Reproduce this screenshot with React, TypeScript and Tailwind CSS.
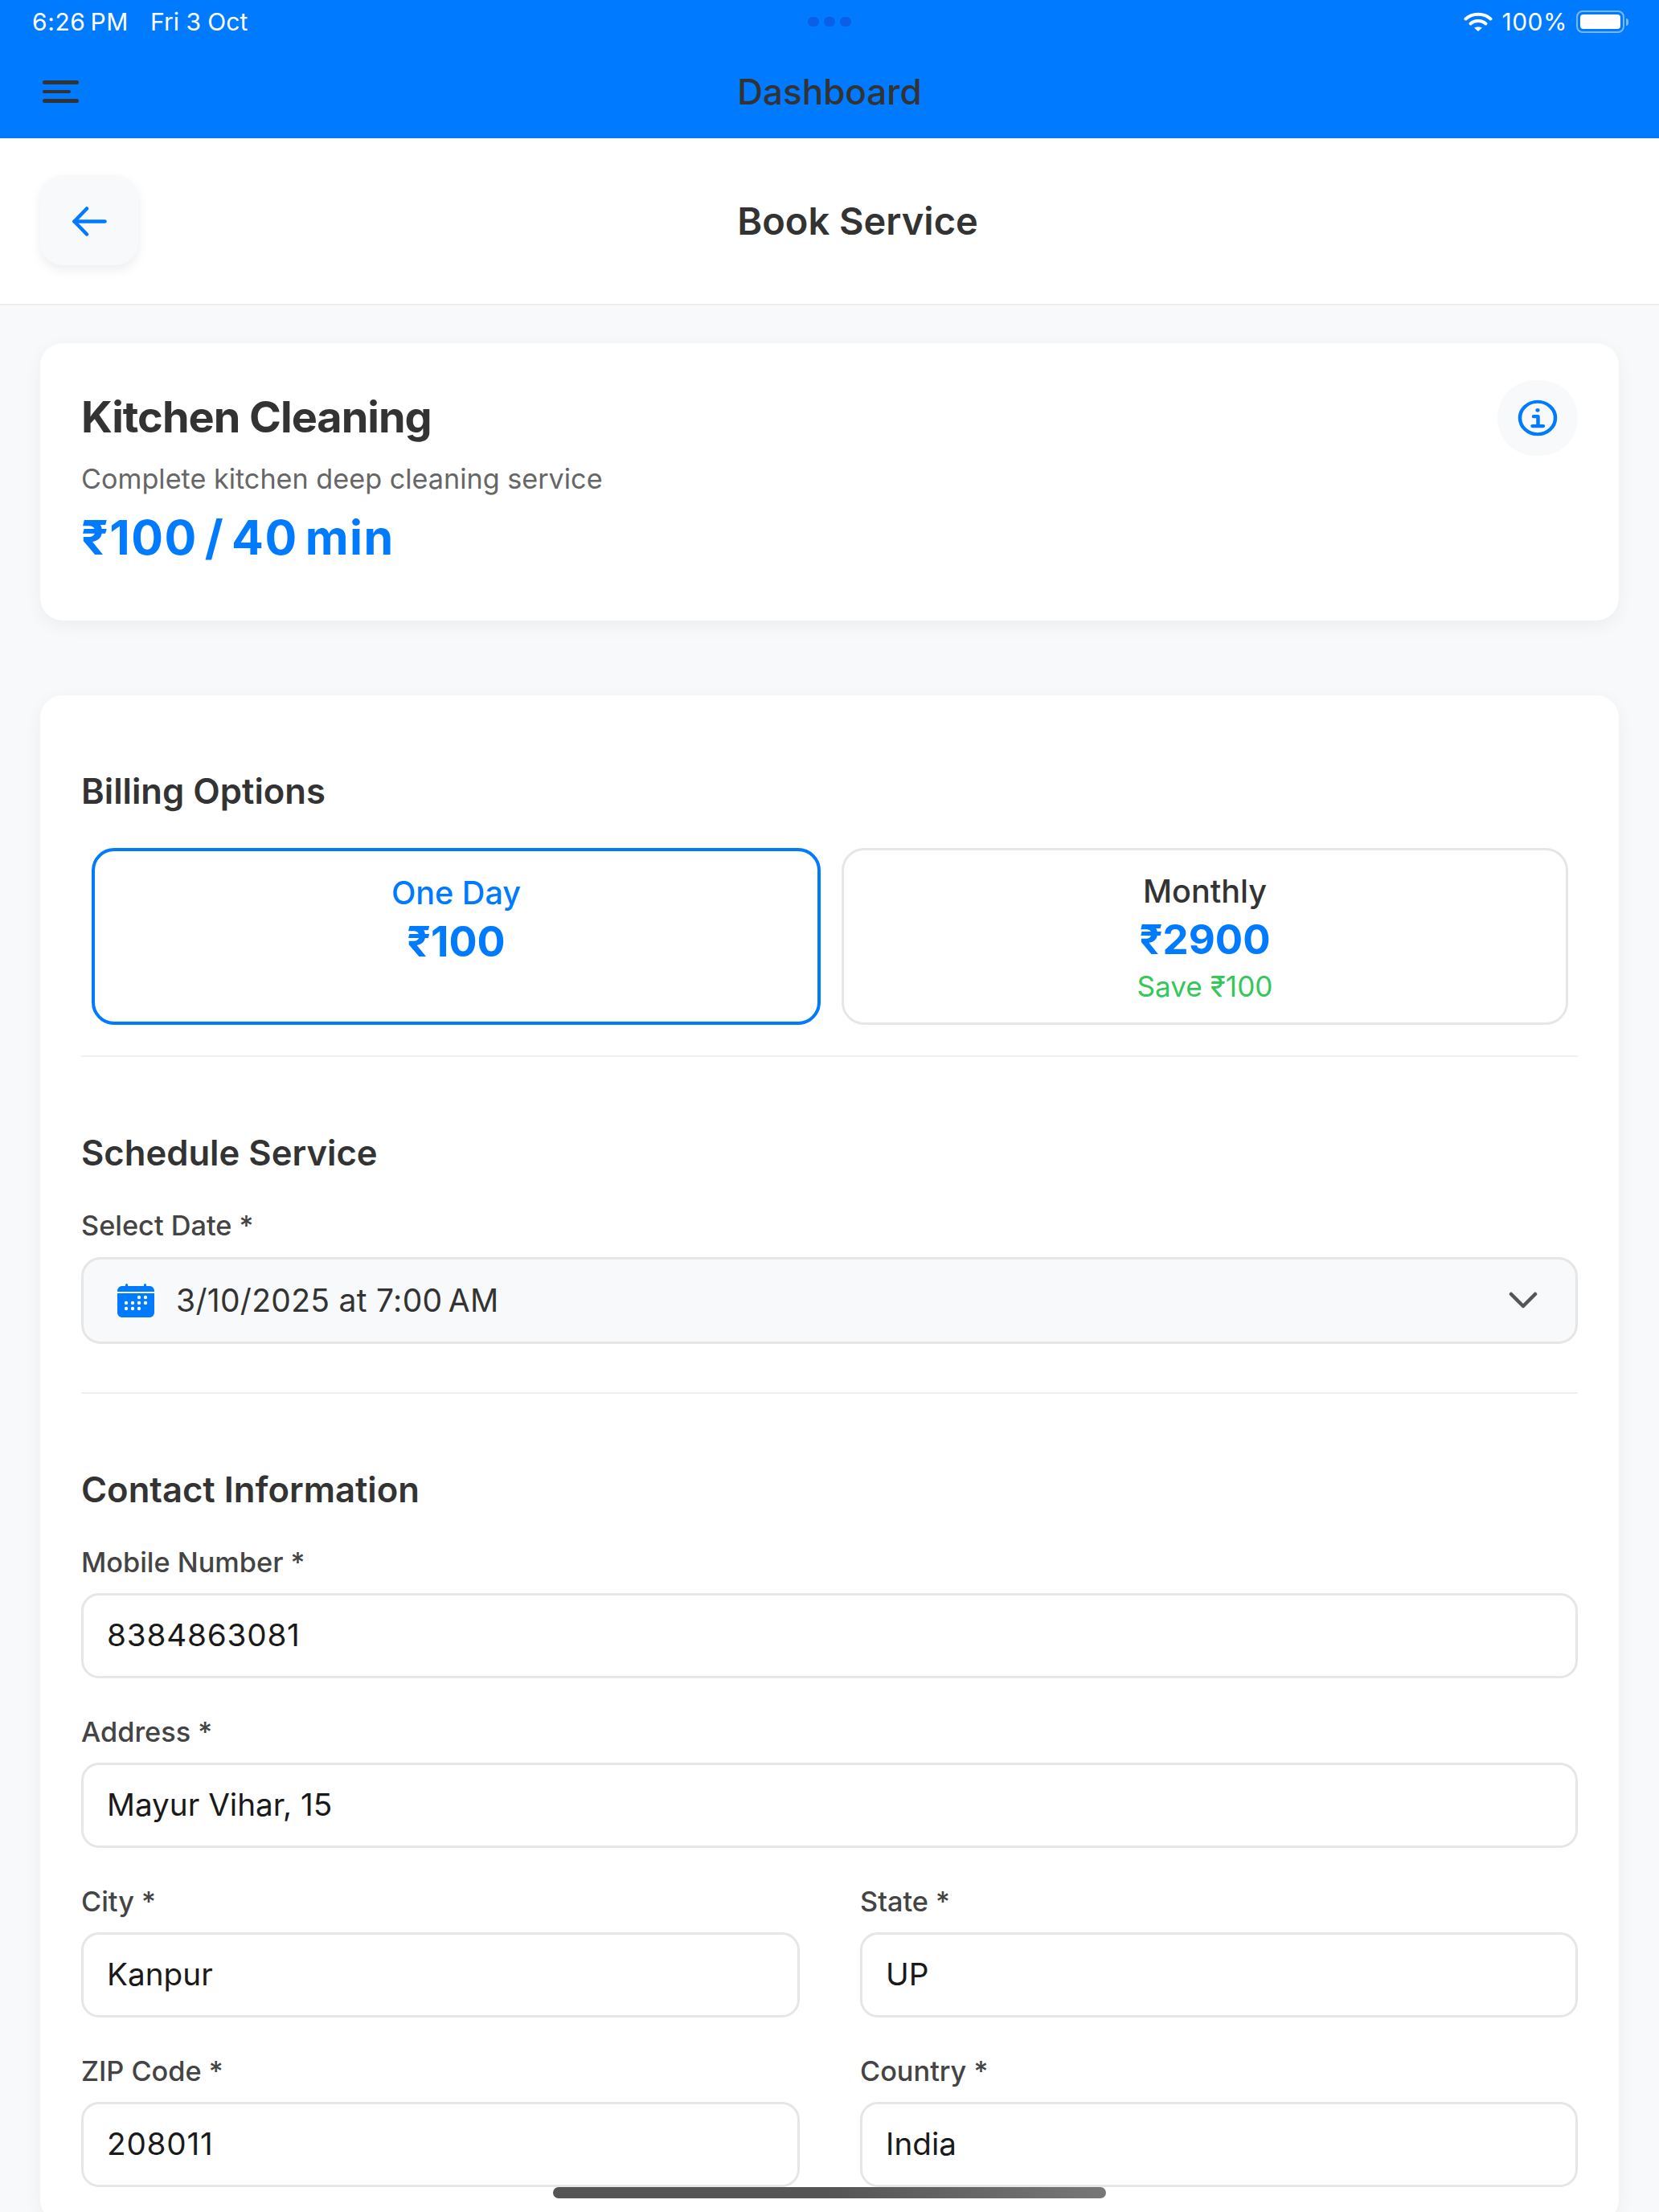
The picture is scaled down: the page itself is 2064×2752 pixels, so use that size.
import React from "react";

function Wifi() {
  return (
    <svg width="36" height="24" viewBox="0 0 36 24" fill="none" stroke="white" strokeLinecap="round">
      <path d="M2.5 8.5C11 0.8 25 0.8 33.5 8.5" strokeWidth="4" />
      <path d="M8.5 14.5C13.5 9.8 22.5 9.8 27.5 14.5" strokeWidth="4" />
      <path d="M13 19.5 C15.5 18 20.5 18 23 19.5 L18 24 Z" fill="white" stroke="none" />
    </svg>
  );
}

function CalendarIcon() {
  const dots: [number, number][] = [
    [26, 17], [34, 17],
    [10, 24], [18, 24], [26, 24], [34, 24],
    [10, 31], [18, 31], [26, 31],
  ];
  return (
    <svg width="46" height="42" viewBox="0 0 46 42" className="shrink-0">
      <rect x="10" y="0" width="3" height="6" rx="1.5" fill="#007AFF" />
      <rect x="33" y="0" width="3" height="6" rx="1.5" fill="#007AFF" />
      <path d="M6 3H40C43.3 3 46 5.7 46 9V10H0V9C0 5.7 2.7 3 6 3Z" fill="#007AFF" />
      <path d="M0 12H46V36C46 39.3 43.3 42 40 42H6C2.7 42 0 39.3 0 36V12Z" fill="#007AFF" />
      {dots.map(([x, y]) => (
        <circle key={`${x}-${y}`} cx={x + 1} cy={y} r="2.2" fill="white" />
      ))}
    </svg>
  );
}

function Field({ label, value, numeric, className }: { label: string; value: string; numeric?: boolean; className?: string }) {
  return (
    <div className={className}>
      <div className="h-[24px] text-[34.3px] leading-[24px] font-medium text-[#444444]">{label}</div>
      <div className={`mt-[25.5px] h-[106px] flex items-center px-[29px] bg-white border-[3px] border-[#e6e6e6] rounded-[22px] text-[38.7px] text-[#1a1a1a] ${numeric ? "tracking-[0.8px]" : ""}`}>
        {value}
      </div>
    </div>
  );
}

function SectionTitle({ children }: { children: React.ReactNode }) {
  return <h2 className="h-[40px] text-[43.6px] leading-[40px] font-semibold text-[#333333]">{children}</h2>;
}

export default function App() {
  return (
    <div
      className="relative h-[2752px] w-[2064px] overflow-hidden bg-[#f8f9fa]"
      style={{ fontFamily: "Inter, 'Noto Sans', sans-serif" }}
    >
      <header className="h-[172px] bg-[#007AFF] shadow-[0_1px_3px_rgba(0,0,0,0.1)]">
        <div className="relative h-[54px] flex items-center justify-between pl-[40px] pr-[38px] text-white text-[30px]">
          <div className="flex gap-[27px]">
            <span className="tracking-[0.6px]">6:26{"\u202f"}PM</span>
            <span>Fri 3 Oct</span>
          </div>
          <div className="absolute left-[1005px] top-[21px] flex gap-[6px]">
            <span className="w-[14px] h-[12px] rounded-full bg-[#0a5fe6]" />
            <span className="w-[14px] h-[12px] rounded-full bg-[#0a5fe6]" />
            <span className="w-[14px] h-[12px] rounded-full bg-[#0a5fe6]" />
          </div>
          <div className="flex items-center">
            <Wifi />
            <span className="ml-[11px] tracking-[0.5px]">100%</span>
            <div className="ml-[11px] flex items-center">
              <div className="w-[60px] h-[28px] rounded-[8px] border-[2px] border-[#7db8ff] p-[3px]">
                <div className="h-full w-full rounded-[4px] bg-white" />
              </div>
              <div className="ml-[2px] w-[3px] h-[9px] rounded-r-full bg-[#7db8ff]" />
            </div>
          </div>
        </div>
        <div className="relative h-[118px] flex items-center justify-center">
          <div className="absolute left-[53px] top-[46px] flex flex-col gap-[7px]">
            <span className="block w-[45px] h-[4.5px] rounded-full bg-[#333333]" />
            <span className="block w-[35px] h-[4.5px] rounded-full bg-[#333333]" />
            <span className="block w-[45px] h-[4.5px] rounded-full bg-[#333333]" />
          </div>
          <span className="mt-[1px] text-[44px] font-medium text-[#333333]">Dashboard</span>
        </div>
      </header>

      <div className="relative h-[208px] bg-white border-b-[2px] border-[#eeeeee] flex items-center justify-center">
        <button className="absolute left-[50px] top-[46px] w-[122px] h-[112px] rounded-[28px] bg-[#f8f9fa] shadow-[0_6px_14px_rgba(0,0,0,0.07)] flex items-center justify-center">
          <svg className="mt-[3px]" width="43" height="37" viewBox="0 0 43 37" fill="none" stroke="#007AFF" strokeWidth="4.5" strokeLinecap="round" strokeLinejoin="round">
            <path d="M2.5 18.5H40.5" />
            <path d="M18 2.5L2.5 18.5L18 34.5" />
          </svg>
        </button>
        <h1 className="ml-[70px] mt-[1px] text-[47px] font-semibold text-[#333333]">Book Service</h1>
      </div>

      <main className="px-[50px] pt-[47px]">
        <section className="relative h-[345px] rounded-[28px] bg-white shadow-[0_6px_22px_rgba(0,0,0,0.05)] pl-[51px] pt-[58px]">
          <h2 className="h-[68px] text-[54px] leading-[68px] font-bold text-[#333333] tracking-[-1px]">Kitchen Cleaning</h2>
          <p className="mt-[21px] h-[44px] text-[34.2px] leading-[44px] text-[#666666]">Complete kitchen deep cleaning service</p>
          <p className="mt-[17px] h-[68px] text-[59px] leading-[68px] font-bold text-[#007AFF] tracking-[1.5px] [word-spacing:-6.5px]">₹100 / 40 min</p>
          <div className="absolute right-[51px] top-[46px] w-[100px] h-[94px] rounded-full bg-[#f8f9fa] flex items-center justify-center">
            <svg width="50" height="46" viewBox="0 0 50 50" preserveAspectRatio="none" fill="none" stroke="#007AFF" strokeWidth="4.5" strokeLinecap="round" strokeLinejoin="round">
              <circle cx="25" cy="25" r="22" />
              <path d="M20 23H25.5V36M18.5 36H32" />
              <circle cx="25" cy="14.5" r="1.4" fill="#007AFF" strokeWidth="2.5" />
            </svg>
          </div>
        </section>

        <section className="mt-[93px] h-[1900px] rounded-[28px] bg-white shadow-[0_6px_22px_rgba(0,0,0,0.05)] px-[51px] pt-[100px]">
          <SectionTitle>Billing Options</SectionTitle>
          <div className="mt-[50px] ml-[13px] mr-[12px] h-[220px] flex gap-[26px]">
            <div className="w-[907px] rounded-[28px] border-[4px] border-[#007AFF] flex flex-col items-center pt-[30px]">
              <div className="text-[39.6px] leading-[44px] font-medium text-[#007AFF]">One Day</div>
              <div className="mt-[9px] text-[52px] leading-[60px] font-bold text-[#007AFF]">₹100</div>
            </div>
            <div className="flex-1 rounded-[28px] border-[3px] border-[#e6e6e6] flex flex-col items-center pt-[29px]">
              <div className="text-[39.6px] leading-[44px] font-medium text-[#333333]">Monthly</div>
              <div className="mt-[8px] text-[51px] leading-[60px] font-bold text-[#007AFF]">₹2900</div>
              <div className="mt-[8px] text-[35.2px] leading-[40px] text-[#34C759]">Save ₹100</div>
            </div>
          </div>
          <div className="mt-[38px] h-[2px] bg-[#f0f0f0]" />

          <div className="mt-[100px]"><SectionTitle>Schedule Service</SectionTitle></div>
          <div className="mt-[58px] h-[24px] text-[34.3px] leading-[24px] font-medium text-[#444444]">Select Date *</div>
          <div className="mt-[27px] h-[108px] flex items-center justify-between pl-[42px] pr-[47px] bg-[#f8f9fa] border-[3px] border-[#e6e6e6] rounded-[24px]">
            <div className="flex items-center gap-[27px]">
              <CalendarIcon />
              <span className="text-[39px] text-[#333333] tracking-[0.3px]">3/10/2025 at 7:00{"\u202f"}AM</span>
            </div>
            <svg width="36" height="24" viewBox="0 0 36 24" fill="none" stroke="#555555" strokeWidth="4.5" strokeLinecap="round" strokeLinejoin="round">
              <path d="M3 4L18 19L33 4" />
            </svg>
          </div>
          <div className="mt-[60px] h-[2px] bg-[#f0f0f0]" />

          <div className="mt-[100px]"><SectionTitle>Contact Information</SectionTitle></div>
          <div className="mt-[58px] flex flex-col gap-[55.5px]">
            <Field label="Mobile Number *" value="8384863081" numeric />
            <Field label="Address *" value="Mayur Vihar, 15" />
            <div className="flex gap-[75px]">
              <Field label="City *" value="Kanpur" className="w-[894px]" />
              <Field label="State *" value="UP" className="flex-1" />
            </div>
            <div className="flex gap-[75px]">
              <Field label="ZIP Code *" value="208011" numeric className="w-[894px]" />
              <Field label="Country *" value="India" className="flex-1" />
            </div>
          </div>
        </section>
      </main>

      <div className="absolute left-[688px] top-[2721px] w-[688px] h-[14px] rounded-full bg-gradient-to-r from-[#555555] via-[#555555] to-[#777777]" />
    </div>
  );
}
